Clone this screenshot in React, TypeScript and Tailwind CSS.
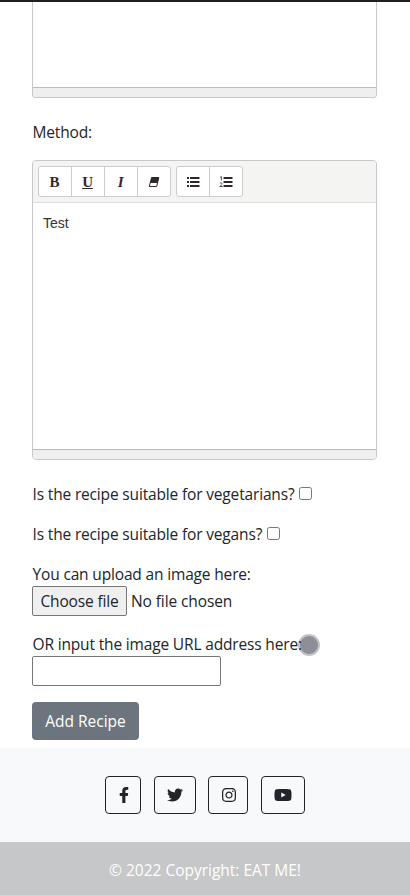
import type { ReactNode } from "react";
import { FaFacebookF, FaInstagram, FaTwitter, FaYoutube } from "react-icons/fa";

function ToolButton({ children, label }: { children: ReactNode; label: string }) {
  return (
    <button
      type="button"
      aria-label={label}
      className="-ml-px flex h-[31px] w-[34px] items-center justify-center border border-[#ccc] bg-white pt-px pr-px font-['Liberation_Serif',serif] text-[15px] leading-none font-bold text-[#33262b] first:ml-0 first:rounded-l-[3px] last:rounded-r-[3px]"
    >
      {children}
    </button>
  );
}

function EraserIcon() {
  return (
    <svg width="12" height="12" viewBox="0 0 12 12">
      <path d="M3.6 1.5h7.2L8.7 10.5H1.3z" fill="none" stroke="#33262b" strokeLinejoin="round" />
      <path d="M3.6 1.2h7.3L9.5 7H2.1z" fill="#33262b" />
    </svg>
  );
}

function BulletListIcon() {
  return (
    <svg width="14" height="12" viewBox="0 0 14 12" fill="#33262b">
      <path d="M1 1h2v2H1zM1 5h2v2H1zM1 9h2v2H1zM4 1h9.5v2H4zM4 5h9.5v2H4zM4 9h9.5v2H4z" />
    </svg>
  );
}

function NumberListIcon() {
  return (
    <svg width="14" height="12" viewBox="0 0 14 12" fill="#33262b">
      <path d="M4.5 1h9v2h-9zM4.5 5h9v2h-9zM4.5 9h9v2h-9z" />
      <path d="M1 1.4l1.4-.8v3.8M.8 7.2q1-1 2 0t-.5 1.8L.8 10.5h3" fill="none" stroke="#33262b" strokeWidth=".8" />
    </svg>
  );
}

function StatusBar() {
  return <div className="h-[10px] shrink-0 border-t border-[#bbb] bg-[#efefef]" />;
}

function CheckRow({ label, text }: { label: string; text: ReactNode }) {
  return (
    <div className="mb-4 flex h-6 items-center">
      {text}
      <input
        type="checkbox"
        aria-label={label}
        className="relative -top-px ml-[5px] size-[13px] appearance-none rounded-[2.5px] border border-[#767676] bg-white"
      />
    </div>
  );
}

const social =
  "flex h-[38px] items-center justify-center rounded border border-[#212529] text-[16px] text-[#212529]";

export default function App() {
  return (
    <div className="flex h-[895px] w-[410px] flex-col overflow-hidden bg-white font-['Open_Sans','Noto_Sans',sans-serif] text-[15.5px] leading-6 tracking-[-0.16px] whitespace-nowrap text-[#212529]">
      <div className="h-[2px] shrink-0 bg-[#231f26]" />
      <main className="h-[746px] shrink-0 pr-[33px] pl-8">
        <div className="flex h-24 flex-col justify-end overflow-hidden rounded-b border border-t-0 border-[#c8c8c8]">
          <StatusBar />
        </div>
        <div className="mt-[22px] mb-4 h-6 pl-[0.5px]">Method:</div>
        <div className="flex h-[300px] flex-col overflow-hidden rounded border border-[#c8c8c8]">
          <div className="flex h-[42px] shrink-0 gap-[5px] border-b border-[#ddd] bg-[#f4f4f3] px-[5px] pt-[5px]">
            <div className="flex">
              <ToolButton label="Bold">B</ToolButton>
              <ToolButton label="Underline">
                <span className="underline decoration-1 underline-offset-1">U</span>
              </ToolButton>
              <ToolButton label="Italic">
                <span className="italic">I</span>
              </ToolButton>
              <ToolButton label="Clear">
                <EraserIcon />
              </ToolButton>
            </div>
            <div className="flex">
              <ToolButton label="Unordered list">
                <BulletListIcon />
              </ToolButton>
              <ToolButton label="Ordered list">
                <NumberListIcon />
              </ToolButton>
            </div>
          </div>
          <div className="flex-1 px-[10px] pt-[10px] font-['Liberation_Sans',sans-serif] text-[14px] leading-5 tracking-normal text-[#333]">
            Test
          </div>
          <StatusBar />
        </div>
        <div className="mt-[22px] pl-[0.5px]">
          <CheckRow label="Vegetarian" text="Is the recipe suitable for vegetarians?" />
          <CheckRow label="Vegan" text="Is the recipe suitable for vegans?" />
        </div>
        <div className="h-6 pl-[0.5px]">You can upload an image here:</div>
        <div className="flex h-[30px] items-center">
          <button
            type="button"
            className="flex h-[30px] w-[95px] items-center justify-center rounded-[2px] border border-[#767676] bg-[#efefef]"
          >
            Choose file
          </button>
          <span className="ml-1 tracking-[-0.1px]">No file chosen</span>
        </div>
        <div className="mt-4 flex h-6 items-center pl-[0.5px]">
          <span className="relative z-10">OR input the image URL address here:</span>
          <span className="relative top-px -ml-[3.5px] size-[22px] shrink-0 rounded-full border-2 border-[#c3c3c3] bg-[#8e8e98]" />
        </div>
        <input
          type="text"
          aria-label="Image URL"
          className="block h-[30px] w-[189px] rounded-[2px] border border-[#767676] bg-white"
        />
        <button
          type="button"
          className="mt-4 flex h-[38px] w-[107px] items-center justify-center rounded bg-[#6c757d] tracking-[0px] text-white"
        >
          Add Recipe
        </button>
      </main>
      <footer>
        <div className="flex h-[94px] bg-[#f8f9fb] pt-7 pl-[105px]">
          <a aria-label="Facebook" className={`${social} w-9 pl-px`}>
            <FaFacebookF />
          </a>
          <a aria-label="Twitter" className={`${social} ml-[13px] w-[42px]`}>
            <FaTwitter />
          </a>
          <a aria-label="Instagram" className={`${social} ml-3 w-10 pl-px`}>
            <FaInstagram />
          </a>
          <a aria-label="YouTube" className={`${social} ml-[13px] w-11`}>
            <FaYoutube className="size-[18px]" />
          </a>
        </div>
        <div className="flex h-[53px] items-center justify-center bg-[#c6c7c9] pt-[3px] tracking-[-0.01px] text-white">
          © 2022 Copyright: EAT ME!
        </div>
      </footer>
    </div>
  );
}
